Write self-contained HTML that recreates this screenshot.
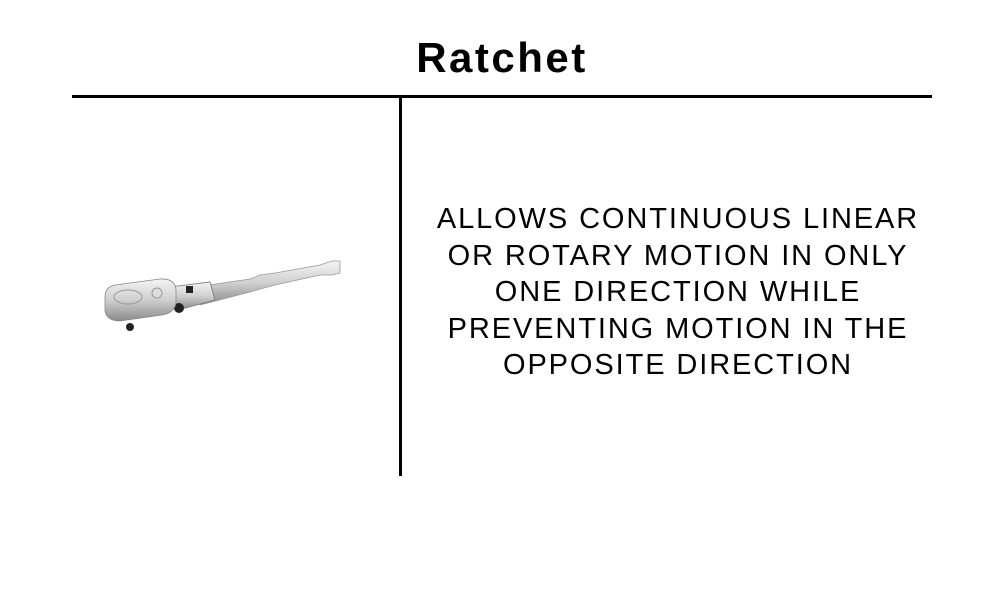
<!DOCTYPE html>
<html><head><style>
body{margin:0;width:1004px;height:591px;background:#fff;position:relative;overflow:hidden;font-family:"Liberation Sans",sans-serif;color:#000}
.t{position:absolute;left:0;width:1004px;top:33px;text-align:center;font-weight:bold;font-size:42px;line-height:50px;letter-spacing:2.5px}
.h{position:absolute;left:72px;width:860px;top:95px;height:3px;background:#000}
.v{position:absolute;left:399px;width:3px;top:96px;height:380px;background:#000}
.d{position:absolute;left:400px;width:556px;top:201px;text-align:center;font-size:29px;line-height:36.6px;letter-spacing:1.9px}
</style></head><body>
<div class="t">Ratchet</div>
<div class="h"></div><div class="v"></div>
<svg style="position:absolute;left:100px;top:255px" width="245" height="80" viewBox="0 0 245 80">
<defs><linearGradient id="g" x1="0" y1="0" x2="0" y2="1"><stop offset="0" stop-color="#f4f4f4"/><stop offset=".5" stop-color="#cfcfcf"/><stop offset="1" stop-color="#8a8a8a"/></linearGradient></defs>
<path d="M95 32 L150 24 L160 20 L175 18 L220 10 L232 6 L240 6 L240 18 L232 20 L220 20 L175 30 L160 34 L150 37 L100 50 Z" fill="url(#g)" stroke="#999" stroke-width=".8"/>
<path d="M70 32 L110 27 L115 45 L78 55 Z" fill="url(#g)" stroke="#777" stroke-width=".8"/>
<rect x="86" y="31" width="7" height="7" fill="#222"/>
<circle cx="79" cy="53" r="5" fill="#222"/>
<path d="M5 42 Q5 32 15 30 L60 24 Q75 23 76 35 L76 48 Q74 58 62 60 L20 66 Q7 66 5 56 Z" fill="url(#g)" stroke="#888" stroke-width=".8"/>
<ellipse cx="28" cy="42" rx="14" ry="7" fill="none" stroke="#999"/>
<circle cx="57" cy="38" r="5" fill="#ddd" stroke="#999"/>
<circle cx="30" cy="72" r="4" fill="#222"/>
</svg>
<div class="d">ALLOWS CONTINUOUS LINEAR<br>OR ROTARY MOTION IN ONLY<br>ONE DIRECTION WHILE<br>PREVENTING MOTION IN THE<br>OPPOSITE DIRECTION</div>
</body></html>
